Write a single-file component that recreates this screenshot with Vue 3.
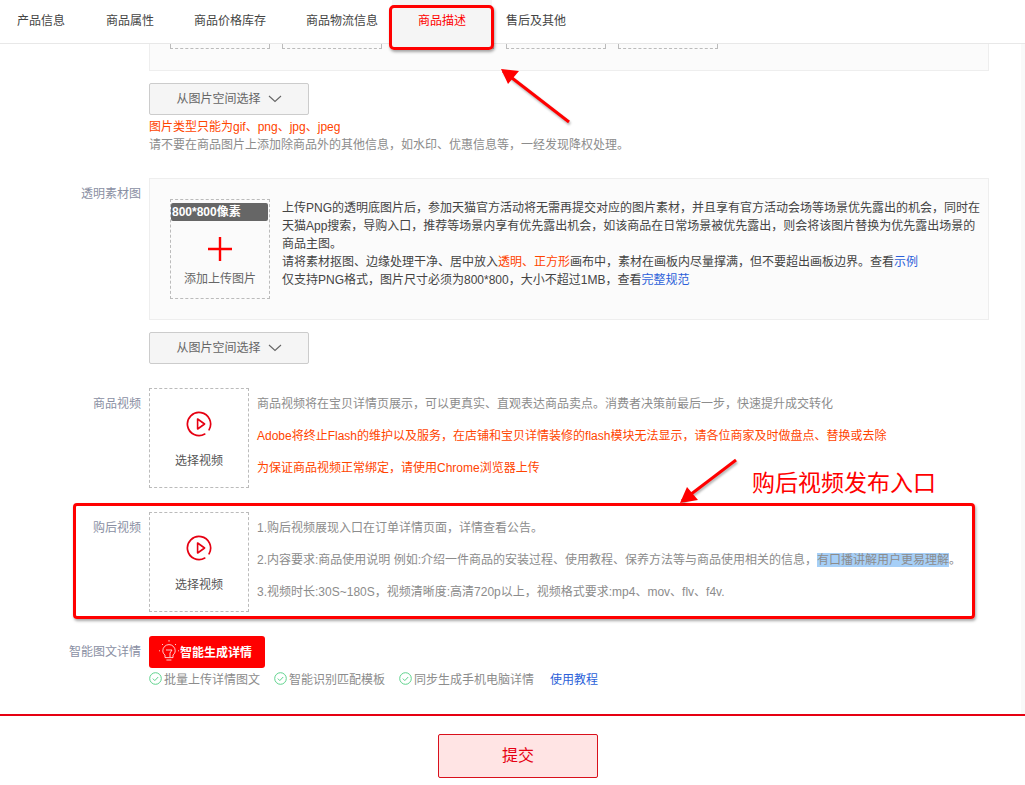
<template>
  <div class="page">
    <div class="tabs">
      <a v-for="t in tabs" :key="t" :class="['tab', { active: t === activeTab }]">{{ t }}</a>
    </div>

    <div class="content">
      <div class="row">
        <div class="label"></div>
        <div class="body">
          <div class="clip-panel">
            <div v-for="n in 5" :key="n" class="clip-box"></div>
          </div>
          <button class="space-btn first-btn">
            从图片空间选择
            <svg class="chevron" width="14" height="8" viewBox="0 0 14 8"><path d="M1 1l6 5.5L13 1" fill="none" stroke="#666" stroke-width="1.1" /></svg>
          </button>
          <div class="tip-red">图片类型只能为gif、png、jpg、jpeg</div>
          <div class="tip-gray">请不要在商品图片上添加除商品外的其他信息，如水印、优惠信息等，一经发现降权处理。</div>
        </div>
      </div>

      <div class="row material-row">
        <div class="label">透明素材图</div>
        <div class="body">
          <div class="material-panel">
            <div class="upload">
              <div class="size-tag">800*800像素</div>
              <svg class="plus" width="24" height="24" viewBox="0 0 24 24"><path d="M12 0v24M0 12h24" stroke="#f00" stroke-width="2.4" /></svg>
              <div class="upload-text">添加上传图片</div>
            </div>
            <div class="material-text">
              上传PNG的透明底图片后，参加天猫官方活动将无需再提交对应的图片素材，并且享有官方活动会场等场景优先露出的机会，同时在天猫App搜索，导购入口，推荐等场景内享有优先露出机会，如该商品在日常场景被优先露出，则会将该图片替换为优先露出场景的商品主图。<br />
              请将素材抠图、边缘处理干净、居中放入<span class="red">透明、正方形</span>画布中，素材在画板内尽量撑满，但不要超出画板边界。查看<a class="link">示例</a><br />
              仅支持PNG格式，图片尺寸必须为800*800，大小不超过1MB，查看<a class="link">完整规范</a>
            </div>
          </div>
          <button class="space-btn second-btn">
            从图片空间选择
            <svg class="chevron" width="14" height="8" viewBox="0 0 14 8"><path d="M1 1l6 5.5L13 1" fill="none" stroke="#666" stroke-width="1.1" /></svg>
          </button>
        </div>
      </div>

      <div v-for="v in videos" :key="v.label" class="row video-row">
        <div class="label">{{ v.label }}</div>
        <div class="video-box">
          <svg width="26" height="26" viewBox="0 0 26 26">
            <path d="M18.8 23.05A11.6 11.6 0 1 1 23.05 18.8" fill="none" stroke="#e60012" stroke-width="1.7" stroke-linecap="round" />
            <path d="M11.6 8v10l7-5z" fill="none" stroke="#e60012" stroke-width="1.6" stroke-linejoin="round" />
          </svg>
          <div class="video-text">选择视频</div>
        </div>
        <div class="video-notes">
          <p v-for="(n, i) in v.notes" :key="i" :class="{ red: n.red }">{{ n.text }}<span v-if="n.mark" class="mark">{{ n.mark }}</span>{{ n.tail }}</p>
        </div>
      </div>

      <div class="row smart-row">
        <div class="label">智能图文详情</div>
        <div class="body">
          <button class="smart-btn">
            <svg width="20" height="22" viewBox="0 0 20 22" fill="none" stroke="#fff" stroke-width="0.8">
              <path d="M6 15c-1.3-1-2.2-2.4-2.2-4.2a6.2 6.2 0 0 1 12.4 0c0 1.8-.9 3.2-2.2 4.2v2.6H6z" />
              <path d="M7 10h6l-2 3v4M7.4 20h5M10 0v1.6M1 10.8H0M20 10.8h-1M3 4l1 1M17 4l-1 1" />
            </svg>
            智能生成详情
          </button>
          <div class="features">
            <span v-for="f in features" :key="f" class="feature">
              <svg width="13" height="13" viewBox="0 0 13 13" fill="none" stroke="#5fd38d" stroke-width="1"><circle cx="6.5" cy="6.5" r="5.8" /><path d="M3.8 6.6l2 2 3.4-3.6" /></svg>
              {{ f }}
            </span>
            <a class="link">使用教程</a>
          </div>
        </div>
      </div>
    </div>

    <div class="scrollbar"></div>

    <div class="footer">
      <button class="submit">提交</button>
    </div>

    <!-- screenshot annotations drawn on top of the page -->
    <div class="mark-tab"></div>
    <div class="mark-row"></div>
    <div class="mark-title">购后视频发布入口</div>
    <svg class="arrows" width="1025" height="785" viewBox="0 0 1025 785">
      <g fill="none" stroke="#f00" stroke-width="3" filter="drop-shadow(1px 2px 1px rgba(0,0,0,.3))">
        <path d="M569 122L503 71" />
        <path d="M736 460L682 501" />
      </g>
      <path d="M501 69l18 2-11 13z" fill="#f00" />
      <path d="M680 503l7-16 11 13z" fill="#f00" />
    </svg>
  </div>
</template>

<script setup>
const tabs = ['产品信息', '商品属性', '商品价格库存', '商品物流信息', '商品描述', '售后及其他']
const activeTab = '商品描述'

const videos = [
  {
    label: '商品视频',
    notes: [
      { text: '商品视频将在宝贝详情页展示，可以更真实、直观表达商品卖点。消费者决策前最后一步，快速提升成交转化' },
      { text: 'Adobe将终止Flash的维护以及服务，在店铺和宝贝详情装修的flash模块无法显示，请各位商家及时做盘点、替换或去除', red: true },
      { text: '为保证商品视频正常绑定，请使用Chrome浏览器上传', red: true },
    ],
  },
  {
    label: '购后视频',
    notes: [
      { text: '1.购后视频展现入口在订单详情页面，详情查看公告。' },
      { text: '2.内容要求:商品使用说明 例如:介绍一件商品的安装过程、使用教程、保养方法等与商品使用相关的信息，', mark: '有口播讲解用户更易理解', tail: '。' },
      { text: '3.视频时长:30S~180S，视频清晰度:高清720p以上，视频格式要求:mp4、mov、flv、f4v.' },
    ],
  },
]

const features = ['批量上传详情图文', '智能识别匹配模板', '同步生成手机电脑详情']
</script>

<style>
html, body { margin: 0; background: #fff; overflow: hidden; }
</style>

<style scoped>
.page { position: relative; width: 1025px; height: 785px; overflow: hidden; background: #fff; font-family: "Liberation Sans", "Noto Sans CJK SC", sans-serif; font-size: 12px; color: #666; }
.tabs { position: relative; z-index: 1; display: flex; height: 43px; padding-left: 17px; background: #fff; border-bottom: 1px solid #e8e8e8; }
.tab { height: 42px; line-height: 42px; margin-right: 40px; color: #444; }
.tab:first-child { margin-right: 41px; }
.tab.active { width: 48px; height: 47px; padding: 0 26px; margin: 0 14px 0 -26px; background: #f5f5f5; color: #f00; }

.row { display: flex; }
.label { flex: none; width: 141px; margin-right: 8px; text-align: right; line-height: 18px; color: #8a8fa3; }
.body { flex: none; width: 840px; }

.clip-panel { display: flex; gap: 12px; box-sizing: border-box; height: 27px; padding: 0 20px; background: #fbfbfb; border: 1px solid #eee; border-top: 0; }
.clip-box { width: 100px; height: 5px; box-sizing: border-box; border: 1px dashed #bbb; border-top: 0; }
.space-btn { display: flex; align-items: center; justify-content: center; gap: 7px; width: 160px; height: 32px; padding: 0 0 3px; background: #f5f5f5; border: 1px solid #ccc; border-radius: 2px; font: inherit; color: #666; }
.chevron { margin-top: 3px; }
.first-btn { margin-top: 12px; }
.tip-red { margin-top: 3px; line-height: 18px; color: #f40; }
.tip-gray { line-height: 18px; color: #8c8c8c; }

.material-row { margin-top: 24px; }
.material-row .label { padding-top: 7px; }
.material-panel { display: flex; box-sizing: border-box; height: 142px; padding: 20px; gap: 12px; background: #fbfbfb; border: 1px solid #eee; }
.upload { flex: none; display: flex; flex-direction: column; align-items: center; box-sizing: border-box; width: 100px; height: 100px; border: 1px dashed #bbb; }
.size-tag { align-self: flex-start; box-sizing: border-box; width: 97px; height: 18px; margin-top: 3px; padding-left: 1px; line-height: 18px; background: #666; color: #fff; font-weight: bold; border-radius: 2px; }
.plus { margin-top: 16px; }
.upload-text { margin-top: 9px; line-height: 18px; color: #666; }
.material-text { flex: none; width: 699px; line-height: 18px; color: #444; }
.second-btn { margin-top: 12px; }
.red { color: #f40; }
.link { color: #2b5fd9; }

.video-row { margin-top: 24px; }
.video-row .label { padding-top: 7px; }
.video-box { flex: none; display: flex; flex-direction: column; align-items: center; box-sizing: border-box; width: 100px; height: 100px; padding-top: 22px; border: 1px dashed #bbb; }
.video-text { margin-top: 15px; line-height: 18px; color: #555; }
.video-notes { margin-left: 8px; padding-top: 7px; color: #8c8c8c; }
.video-notes p { margin: 0 0 14px; line-height: 18px; }
.video-notes p:last-child { margin-bottom: 0; }
.video-notes p.red { color: #f40; }
.mark { background: #a6cff7; }

.smart-row { margin-top: 24px; }
.smart-row .label { padding-top: 7px; }
.smart-btn { display: flex; align-items: center; gap: 1px; width: 116px; height: 32px; padding: 0 0 2px 10px; background: #f00; border: 0; border-radius: 3px; font: inherit; font-weight: bold; color: #fff; }
.features { display: flex; align-items: center; gap: 14px; height: 18px; margin-top: 1px; color: #8c8c8c; }
.feature { display: flex; align-items: center; gap: 2px; }
.features .link { margin-left: 2px; }

.footer { position: absolute; left: 0; right: 0; top: 714px; height: 71px; box-sizing: border-box; padding: 18px 0 0 438px; background: #fff; border-top: 2px solid #e60012; }
.submit { display: block; width: 160px; height: 44px; padding: 0 0 5px; background: #ffe4e4; border: 1px solid #d9101c; border-radius: 2px; font: inherit; font-size: 16px; color: #e60012; }
.scrollbar { position: absolute; top: 0; right: 0; bottom: 0; width: 4px; background: #f9f9f9; }

.mark-tab { position: absolute; z-index: 2; left: 389px; top: 5px; width: 99px; height: 39px; border: 3px solid #f00; border-radius: 5px; box-shadow: 1px 2px 3px rgba(0,0,0,.35); }
.mark-row { position: absolute; z-index: 2; left: 73px; top: 503px; width: 896px; height: 110px; border: 3px solid #f00; border-radius: 4px; box-shadow: 1px 2px 3px rgba(0,0,0,.35); }
.mark-title { position: absolute; z-index: 2; left: 752px; top: 468px; font-size: 23px; line-height: 30px; color: #f00; white-space: nowrap; }
.arrows { position: absolute; z-index: 2; left: 0; top: 0; pointer-events: none; }
</style>
